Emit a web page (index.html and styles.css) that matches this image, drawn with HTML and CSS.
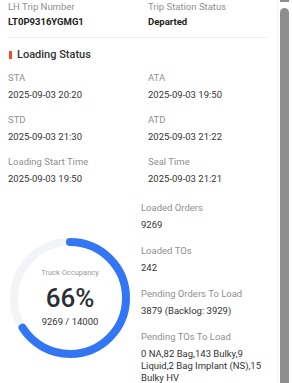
FILE: index.html
```html
<!DOCTYPE html>
<html>
<head>
<meta charset="utf-8">
<link rel="stylesheet" href="styles.css">
</head>
<body>
<div class="page">
  <div class="content">
    <div class="head-grid">
      <div class="field tight">
        <div class="label">LH Trip Number</div>
        <div class="value strong">LT0P9316YGMG1</div>
      </div>
      <div class="field tight">
        <div class="label">Trip Station Status</div>
        <div class="value strong">Departed</div>
      </div>
    </div>
    <div class="section-title"><span class="mark"></span>Loading Status</div>
    <div class="time-grid">
      <div class="field"><div class="label">STA</div><div class="value">2025-09-03 20:20</div></div>
      <div class="field"><div class="label">ATA</div><div class="value">2025-09-03 19:50</div></div>
      <div class="field"><div class="label">STD</div><div class="value">2025-09-03 21:30</div></div>
      <div class="field"><div class="label">ATD</div><div class="value">2025-09-03 21:22</div></div>
      <div class="field"><div class="label">Loading Start Time</div><div class="value">2025-09-03 19:50</div></div>
      <div class="field"><div class="label">Seal Time</div><div class="value">2025-09-03 21:21</div></div>
    </div>
    <div class="lower">
      <div class="gauge">
        <svg class="ring" width="120" height="120" viewBox="0 0 120 120">
          <circle cx="60" cy="60" r="56" fill="none" stroke="#f2f4f8" stroke-width="8"/>
          <circle cx="60" cy="60" r="56" fill="none" stroke="#3276f5" stroke-width="8" stroke-linecap="round" stroke-dasharray="232.2 400" transform="rotate(-90 60 60)"/>
        </svg>
        <div class="gauge-text">
          <div class="g-label">Truck Occupancy</div>
          <div class="g-pct">66%</div>
          <div class="g-count">9269 / 14000</div>
        </div>
      </div>
      <div class="stats">
        <div class="field"><div class="label">Loaded Orders</div><div class="value">9269</div></div>
        <div class="field"><div class="label">Loaded TOs</div><div class="value">242</div></div>
        <div class="field"><div class="label">Pending Orders To Load</div><div class="value">3879 (Backlog: 3929)</div></div>
        <div class="field"><div class="label">Pending TOs To Load</div><div class="value multi">0 NA,82 Bag,143 Bulky,9 Liquid,2 Bag Implant (NS),15 Bulky HV</div></div>
      </div>
    </div>
  </div>
  <div class="scrollbar">
    <div class="scroll-cap"></div>
    <div class="scroll-thumb"></div>
  </div>
</div>
</body>
</html>
```

FILE: styles.css
```css
* { box-sizing: border-box; }
html, body { margin: 0; padding: 0; background: #fff; }
body {
  font-family: Roboto, "Liberation Sans", sans-serif;
  color: #333;
  width: 292px;
  height: 383px;
  overflow: hidden;
}
.page {
  display: flex;
  height: 383px;
  overflow: hidden;
}
.content {
  width: 277px;
  padding: 0 11px 0 8px;
  flex: none;
}
.field .label {
  font-size: 9.5px;
  line-height: 14px;
  color: #8f8f8f;
}
.field .value {
  font-size: 9.5px;
  line-height: 14px;
  color: #333;
  margin-top: 3px;
}
.field.tight .value { margin-top: 1px; }
.value.strong { font-weight: 700; color: #222; }
.head-grid {
  display: grid;
  grid-template-columns: 140px 1fr;
  padding-bottom: 8px;
  border-bottom: 1px solid #ececf0;
}
.section-title {
  display: flex;
  align-items: center;
  margin-top: 9px;
  font-size: 11px;
  line-height: 16px;
  font-weight: 500;
  color: #333;
}
.mark {
  width: 3px;
  height: 8px;
  background: #ee4d2d;
  margin: 0 5px 0 1px;
}
.time-grid {
  display: grid;
  grid-template-columns: 140px 1fr;
  row-gap: 11px;
  margin-top: 8px;
}
.lower {
  display: flex;
  margin-top: 13px;
}
.gauge {
  width: 133px;
  flex: none;
  position: relative;
  padding-left: 2px;
  padding-top: 39px;
}
.ring { display: block; }
.gauge-text {
  position: absolute;
  left: 2px;
  top: 39px;
  width: 120px;
  height: 120px;
  display: flex;
  flex-direction: column;
  align-items: center;
}
.g-label {
  margin-top: 30px;
  font-size: 7.5px;
  line-height: 10px;
  color: #9a9a9a;
}
.g-pct {
  margin-top: 5px;
  font-size: 26px;
  line-height: 30px;
  font-weight: 500;
  color: #2b2f36;
}
.g-count {
  margin-top: 3px;
  font-size: 9.5px;
  line-height: 12px;
  color: #333;
}
.stats {
  display: flex;
  flex-direction: column;
  gap: 12px;
  padding-top: 2px;
}
.value.multi {
  line-height: 12px;
  margin-top: 4px;
}
.scrollbar {
  width: 15px;
  flex: none;
  border-left: 1px solid #f4f4f4;
  display: flex;
  flex-direction: column;
  padding-left: 2px;
}
.scroll-cap {
  width: 9px;
  height: 2px;
  background: #8e8e8e;
}
.scroll-thumb {
  width: 9px;
  margin-top: 6px;
  flex: 1;
  background: #8e8e8e;
  border-radius: 5px 5px 0 0;
}
```
